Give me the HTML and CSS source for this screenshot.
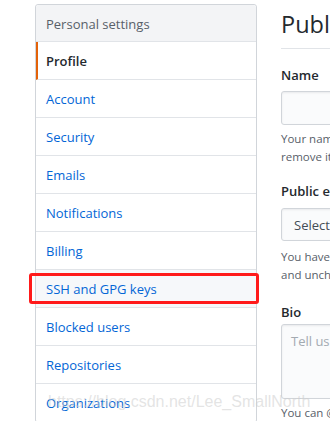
FILE: index.html
```html
<!DOCTYPE html>
<html>
<head>
<meta charset="utf-8">
<link rel="stylesheet" href="styles.css">
</head>
<body>
<div class="page">
  <nav class="menu">
    <div class="menu-heading">Personal settings</div>
    <a class="menu-item selected">Profile</a>
    <a class="menu-item">Account</a>
    <a class="menu-item">Security</a>
    <a class="menu-item">Emails</a>
    <a class="menu-item">Notifications</a>
    <a class="menu-item">Billing</a>
    <a class="menu-item hovered">SSH and GPG keys<span class="highlight"></span></a>
    <a class="menu-item">Blocked users</a>
    <a class="menu-item">Repositories</a>
    <a class="menu-item">Organizations</a>
  </nav>
  <main class="main">
    <div class="subhead"><h2 class="subhead-heading">Public profile</h2></div>
    <div class="group first">
      <label class="label">Name</label>
      <div class="input"></div>
      <p class="note">Your name may appear around GitHub where you contribute or are mentioned. You can<br>remove it at any time.</p>
    </div>
    <div class="group second">
      <label class="label">Public email</label>
      <div class="input select">Select a verified email to display</div>
      <p class="note">You have set your email address to private. To toggle email privacy, go to email settings<br>and uncheck "Keep my email address private."</p>
    </div>
    <div class="group third">
      <label class="label">Bio</label>
      <div class="input textarea">Tell us a little bit about yourself</div>
      <p class="note">You can @mention other users and organizations to link to them.</p>
    </div>
  </main>
</div>
<div class="watermark">https://blog.csdn.net/Lee_SmallNorth</div>
</body>
</html>
```
FILE: styles.css
```css
html, body {
  margin: 0;
  padding: 0;
  background: #fff;
  overflow: hidden;
}
body {
  font-family: "Open Sans", "Noto Sans", sans-serif;
  color: #24292e;
  position: relative;
  width: 330px;
  height: 421px;
}
.page {
  display: flex;
  gap: 24px;
  padding: 4px 0 0 35px;
}
.menu {
  flex: none;
  width: 222px;
  box-sizing: border-box;
  border: 1px solid #d1d5da;
  border-radius: 3px;
  align-self: flex-start;
  display: flex;
  flex-direction: column;
}
.menu-heading {
  height: 37px;
  box-sizing: border-box;
  background: #f3f4f6;
  border-bottom: 1px solid #e1e4e8;
  border-radius: 3px 3px 0 0;
  padding: 1px 10px 0;
  display: flex;
  align-items: center;
  font-size: 13px;
  color: #586069;
}
.menu-item {
  position: relative;
  height: 38px;
  box-sizing: border-box;
  border-bottom: 1px solid #e1e4e8;
  padding-left: 10px;
  display: flex;
  align-items: center;
  font-size: 13px;
  color: #0366d6;
  text-decoration: none;
}
.menu-item.selected {
  color: #24292e;
  font-weight: 600;
  border-left: 2px solid #e36209;
  padding-left: 8px;
}
.menu-item.hovered {
  background: #f6f8fa;
}
.highlight {
  position: absolute;
  left: -7px;
  right: -3px;
  top: 3px;
  height: 31px;
  box-sizing: border-box;
  border: 3px solid #ff1a1a;
  border-radius: 3px;
}
.main {
  flex: none;
  width: 640px;
}
.subhead {
  padding-top: 2px;
  padding-bottom: 6px;
  border-bottom: 1px solid #e1e4e8;
}
.subhead-heading {
  margin: 0;
  font-size: 23.5px;
  font-weight: 400;
  line-height: 36px;
}
.group {
  display: flex;
  flex-direction: column;
}
.group.first {
  margin-top: 16px;
}
.group.second {
  margin-top: 15px;
}
.group.third {
  margin-top: 18px;
}
.label {
  font-size: 13px;
  font-weight: 600;
  line-height: 21px;
  margin-bottom: 5px;
}
.input {
  height: 34px;
  box-sizing: border-box;
  background: #fafbfc;
  border: 1px solid #d1d5da;
  border-radius: 3px;
  box-shadow: inset 0 1px 2px rgba(27,31,35,0.075);
}
.select {
  height: 33px;
  margin-top: 1px;
  padding-left: 12px;
  display: flex;
  align-items: center;
  font-size: 13px;
  color: #444d56;
}
.textarea {
  height: 75px;
  margin-top: -4px;
  padding: 7px 9px;
  font-size: 13px;
  color: #a3aab1;
}
.note {
  margin: 5px 0 0;
  font-size: 11.5px;
  line-height: 18px;
  color: #586069;
  white-space: nowrap;
}
.second .note {
  margin-top: 7px;
}
.watermark {
  position: absolute;
  left: 48px;
  top: 393px;
  font-family: "Liberation Sans", Arial, sans-serif;
  font-size: 16px;
  color: rgba(205, 205, 205, 0.55);
  white-space: nowrap;
}
```
